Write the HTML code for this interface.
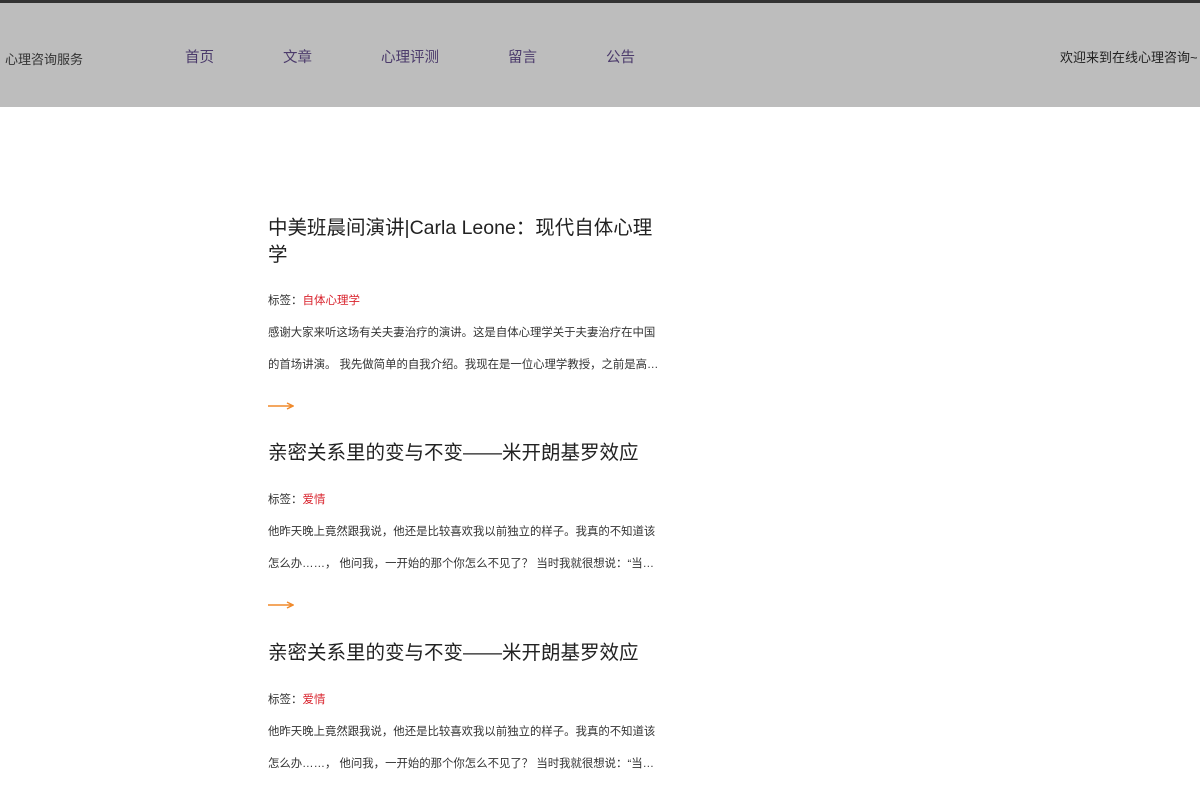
<!DOCTYPE html>
<html><head><meta charset="utf-8"><style>
body{margin:0;width:1200px;height:800px;overflow:hidden;background:#fff;font-family:"Liberation Sans","Noto Sans CJK SC",sans-serif;position:relative}
.top{position:absolute;left:0;top:0;width:1200px;height:3px;background:#333}
.hdr{position:absolute;left:0;top:3px;width:1200px;height:104px;background:#bdbdbd}
.a{position:absolute;white-space:nowrap}
.logo{left:5px;top:49px;font-size:13px;color:#333}
.nav{top:46px;font-size:14.5px;color:#4b3a6b}
.right{left:1060px;top:47px;font-size:13px;color:#222}
.t{font-size:19.5px;color:#222;line-height:27px;left:268px;width:395px;white-space:normal}
.tag{font-size:11.5px;color:#333;left:268px}
.tag span{color:#d9232d}
.p{font-size:11.4px;color:#333;left:268px}
.arr{left:268px;width:26px;height:10px}
</style></head><body>
<div class="top"></div>
<div class="hdr"></div>
<div class="a logo">心理咨询服务</div>
<div class="a nav" style="left:185px">首页</div>
<div class="a nav" style="left:283px">文章</div>
<div class="a nav" style="left:381px">心理评测</div>
<div class="a nav" style="left:508px">留言</div>
<div class="a nav" style="left:606px">公告</div>
<div class="a right">欢迎来到在线心理咨询~</div>

<div class="a t" style="top:215px">中美班晨间演讲|Carla Leone：现代自体心理学</div>
<div class="a tag" style="top:292px">标签：<span>自体心理学</span></div>
<div class="a p" style="top:324px">感谢大家来听这场有关夫妻治疗的演讲。这是自体心理学关于夫妻治疗在中国</div>
<div class="a p" style="top:356px">的首场讲演。 我先做简单的自我介绍。我现在是一位心理学教授，之前是高…</div>
<svg class="a arr" style="top:401px" viewBox="0 0 26 10"><path d="M0 5H24M19 2L25 5L19 8" stroke="#f08a2c" stroke-width="1.5" fill="none"/></svg>

<div class="a t" style="top:440px">亲密关系里的变与不变——米开朗基罗效应</div>
<div class="a tag" style="top:491px">标签：<span>爱情</span></div>
<div class="a p" style="top:523px">他昨天晚上竟然跟我说，他还是比较喜欢我以前独立的样子。我真的不知道该</div>
<div class="a p" style="top:555px">怎么办……， 他问我，一开始的那个你怎么不见了？ 当时我就很想说：“当…</div>
<svg class="a arr" style="top:600px" viewBox="0 0 26 10"><path d="M0 5H24M19 2L25 5L19 8" stroke="#f08a2c" stroke-width="1.5" fill="none"/></svg>

<div class="a t" style="top:640px">亲密关系里的变与不变——米开朗基罗效应</div>
<div class="a tag" style="top:691px">标签：<span>爱情</span></div>
<div class="a p" style="top:723px">他昨天晚上竟然跟我说，他还是比较喜欢我以前独立的样子。我真的不知道该</div>
<div class="a p" style="top:755px">怎么办……， 他问我，一开始的那个你怎么不见了？ 当时我就很想说：“当…</div>
</body></html>
